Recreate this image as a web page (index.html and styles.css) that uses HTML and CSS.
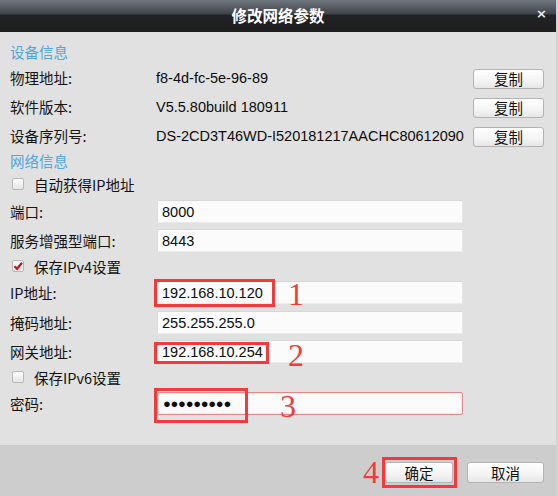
FILE: index.html
```html
<!DOCTYPE html>
<html lang="zh">
<head>
<meta charset="utf-8">
<link rel="stylesheet" href="styles.css">
</head>
<body>
<div class="dialog">
  <div class="titlebar">
    <span class="title">修改网络参数</span>
    <span class="close">×</span>
  </div>
  <div class="form">
    <div class="head">设备信息</div>

    <div class="label">物理地址:</div>
    <div class="value">f8-4d-fc-5e-96-89</div>
    <div class="btn copy">复制</div>

    <div class="label">软件版本:</div>
    <div class="value">V5.5.80build 180911</div>
    <div class="btn copy">复制</div>

    <div class="label">设备序列号:</div>
    <div class="value">DS-2CD3T46WD-I520181217AACHC80612090</div>
    <div class="btn copy">复制</div>

    <div class="head">网络信息</div>

    <div class="check"><span class="box"></span>自动获得IP地址</div>

    <div class="label">端口:</div>
    <div class="field">8000</div>

    <div class="label">服务增强型端口:</div>
    <div class="field">8443</div>

    <div class="check"><span class="box checked"><svg viewBox="0 0 12 12" width="12" height="12"><path d="M2.5 6.2 L5 8.8 L10 2.8" fill="none" stroke="#c8141e" stroke-width="2.2"/></svg></span>保存IPv4设置</div>

    <div class="label">IP地址:</div>
    <div class="field">192.168.10.120<span class="mark mark-ip"></span><span class="num num-1">1</span></div>

    <div class="label">掩码地址:</div>
    <div class="field">255.255.255.0</div>

    <div class="label">网关地址:</div>
    <div class="field">192.168.10.254<span class="mark mark-gw"></span><span class="num num-2">2</span></div>

    <div class="check"><span class="box"></span>保存IPv6设置</div>

    <div class="label">密码:</div>
    <div class="field pwd"><span class="dots">●●●●●●●●●</span><span class="mark mark-pwd"></span><span class="num num-3">3</span></div>
  </div>
  <div class="footer">
    <div class="btn ok">确定<span class="mark mark-ok"></span><span class="num num-4">4</span></div>
    <div class="btn cancel">取消</div>
  </div>
</div>
</body>
</html>
```
FILE: styles.css
```css
* { box-sizing: border-box; }
html, body { margin: 0; padding: 0; }
body {
  width: 558px;
  height: 496px;
  overflow: hidden;
  background: #e1e1e1;
  font-family: "Liberation Sans", "Noto Sans CJK SC", sans-serif;
  font-size: 14.5px;
  color: #111;
}
.dialog {
  width: 558px;
  height: 496px;
  display: flex;
  flex-direction: column;
  background: #e1e1e1;
  border-right: 2px solid #d2d2d2;
}
.titlebar {
  height: 32px;
  flex: none;
  position: relative;
  display: flex;
  align-items: center;
  justify-content: center;
  background: linear-gradient(#70767e 0, #555a62 8px, #3e4249 14px, #212224 15px, #1f1f1f 32px);
}
.title {
  color: #fff;
  font-family: "Noto Sans CJK SC", sans-serif;
  font-weight: 700;
  font-size: 15.5px;
  letter-spacing: 0;
  margin-top: -2px;
}
.close {
  position: absolute;
  right: 9px;
  top: 6px;
  color: #eee;
  font-family: "DejaVu Sans", sans-serif;
  font-weight: 700;
  font-size: 13px;
}
.form {
  flex: 1;
  display: grid;
  grid-template-columns: 137px 306px 71px;
  column-gap: 10px;
  grid-template-rows: 23px 29px 29px 29px 21px 26px 29px 29px 22px 31px 29px 29px 22px 31px;
  padding: 8px 0 0 10px;
  align-items: center;
}
.head {
  grid-column: 1 / -1;
  color: #52a6dd;
  font-family: "Noto Sans CJK SC", sans-serif;
}
.label {
  grid-column: 1;
  font-family: "Noto Sans CJK SC", sans-serif;
  color: #151515;
}
.value {
  grid-column: 2;
  white-space: nowrap;
  margin-left: -1px;
  color: #0c0c0c;
}
.btn {
  height: 21px;
  border: 1px solid #b3b3b3;
  border-radius: 3px;
  background: linear-gradient(#ffffff, #f4f4f4 60%, #e6e6e6);
  display: flex;
  align-items: center;
  justify-content: center;
  font-family: "Noto Sans CJK SC", sans-serif;
  font-size: 14.5px;
  color: #111;
}
.copy {
  grid-column: 3;
  height: 20px;
  margin-top: 2px;
}
.check {
  grid-column: 1 / -1;
  display: flex;
  align-items: center;
  font-family: "Noto Sans CJK SC", sans-serif;
}
.box {
  width: 12px;
  height: 12px;
  margin: 0 10px 0 2px;
  border: 1px solid #b9b9b9;
  border-radius: 2px;
  background: linear-gradient(#fdfdfd, #e4e4e4);
  display: inline-flex;
}
.box svg { margin: -1px; }
.field {
  grid-column: 2;
  position: relative;
  height: 23px;
  padding-left: 4px;
  display: flex;
  align-items: center;
  background: #fbfbfb;
  border-top: 1px solid #d6d6d6;
  border-left: 1px solid #dcdcdc;
  border-right: 1px solid #e6e6e6;
  border-bottom: 1px solid #ececec;
  color: #0c0c0c;
}
.pwd {
  border: 1px solid #df8a8a;
  border-radius: 2px;
  box-shadow: inset 0 0 2px #f0b6b6;
}
.dots {
  font-family: "Liberation Sans", sans-serif;
  font-size: 13px;
  letter-spacing: -0.3px;
  margin-left: 1px;
}
.mark {
  position: absolute;
  border: 3px solid #f23a3a;
}
.mark-ip { left: -4px; top: -3px; width: 121px; height: 28px; }
.mark-gw { left: -4px; top: 1px; width: 115px; height: 22px; }
.mark-pwd { left: -4px; top: -5px; width: 94px; height: 35px; }
.num {
  position: absolute;
  font-family: "Liberation Serif", serif;
  font-size: 32px;
  line-height: 1;
  color: #f03c3c;
}
.num-1 { left: 130px; top: -4px; }
.num-2 { left: 130px; top: -2px; }
.num-3 { left: 122px; top: -3px; }
.footer {
  height: 51px;
  flex: none;
  background: #cdcdcd;
  display: flex;
  justify-content: flex-end;
  align-items: flex-start;
  gap: 14px;
  padding: 17px 12px 0 0;
}
.ok {
  position: relative;
  width: 68px;
}
.cancel {
  width: 77px;
}
.mark-ok { left: -4px; top: -6px; width: 75px; height: 31px; }
.num-4 { left: -23px; top: -7px; }
```
